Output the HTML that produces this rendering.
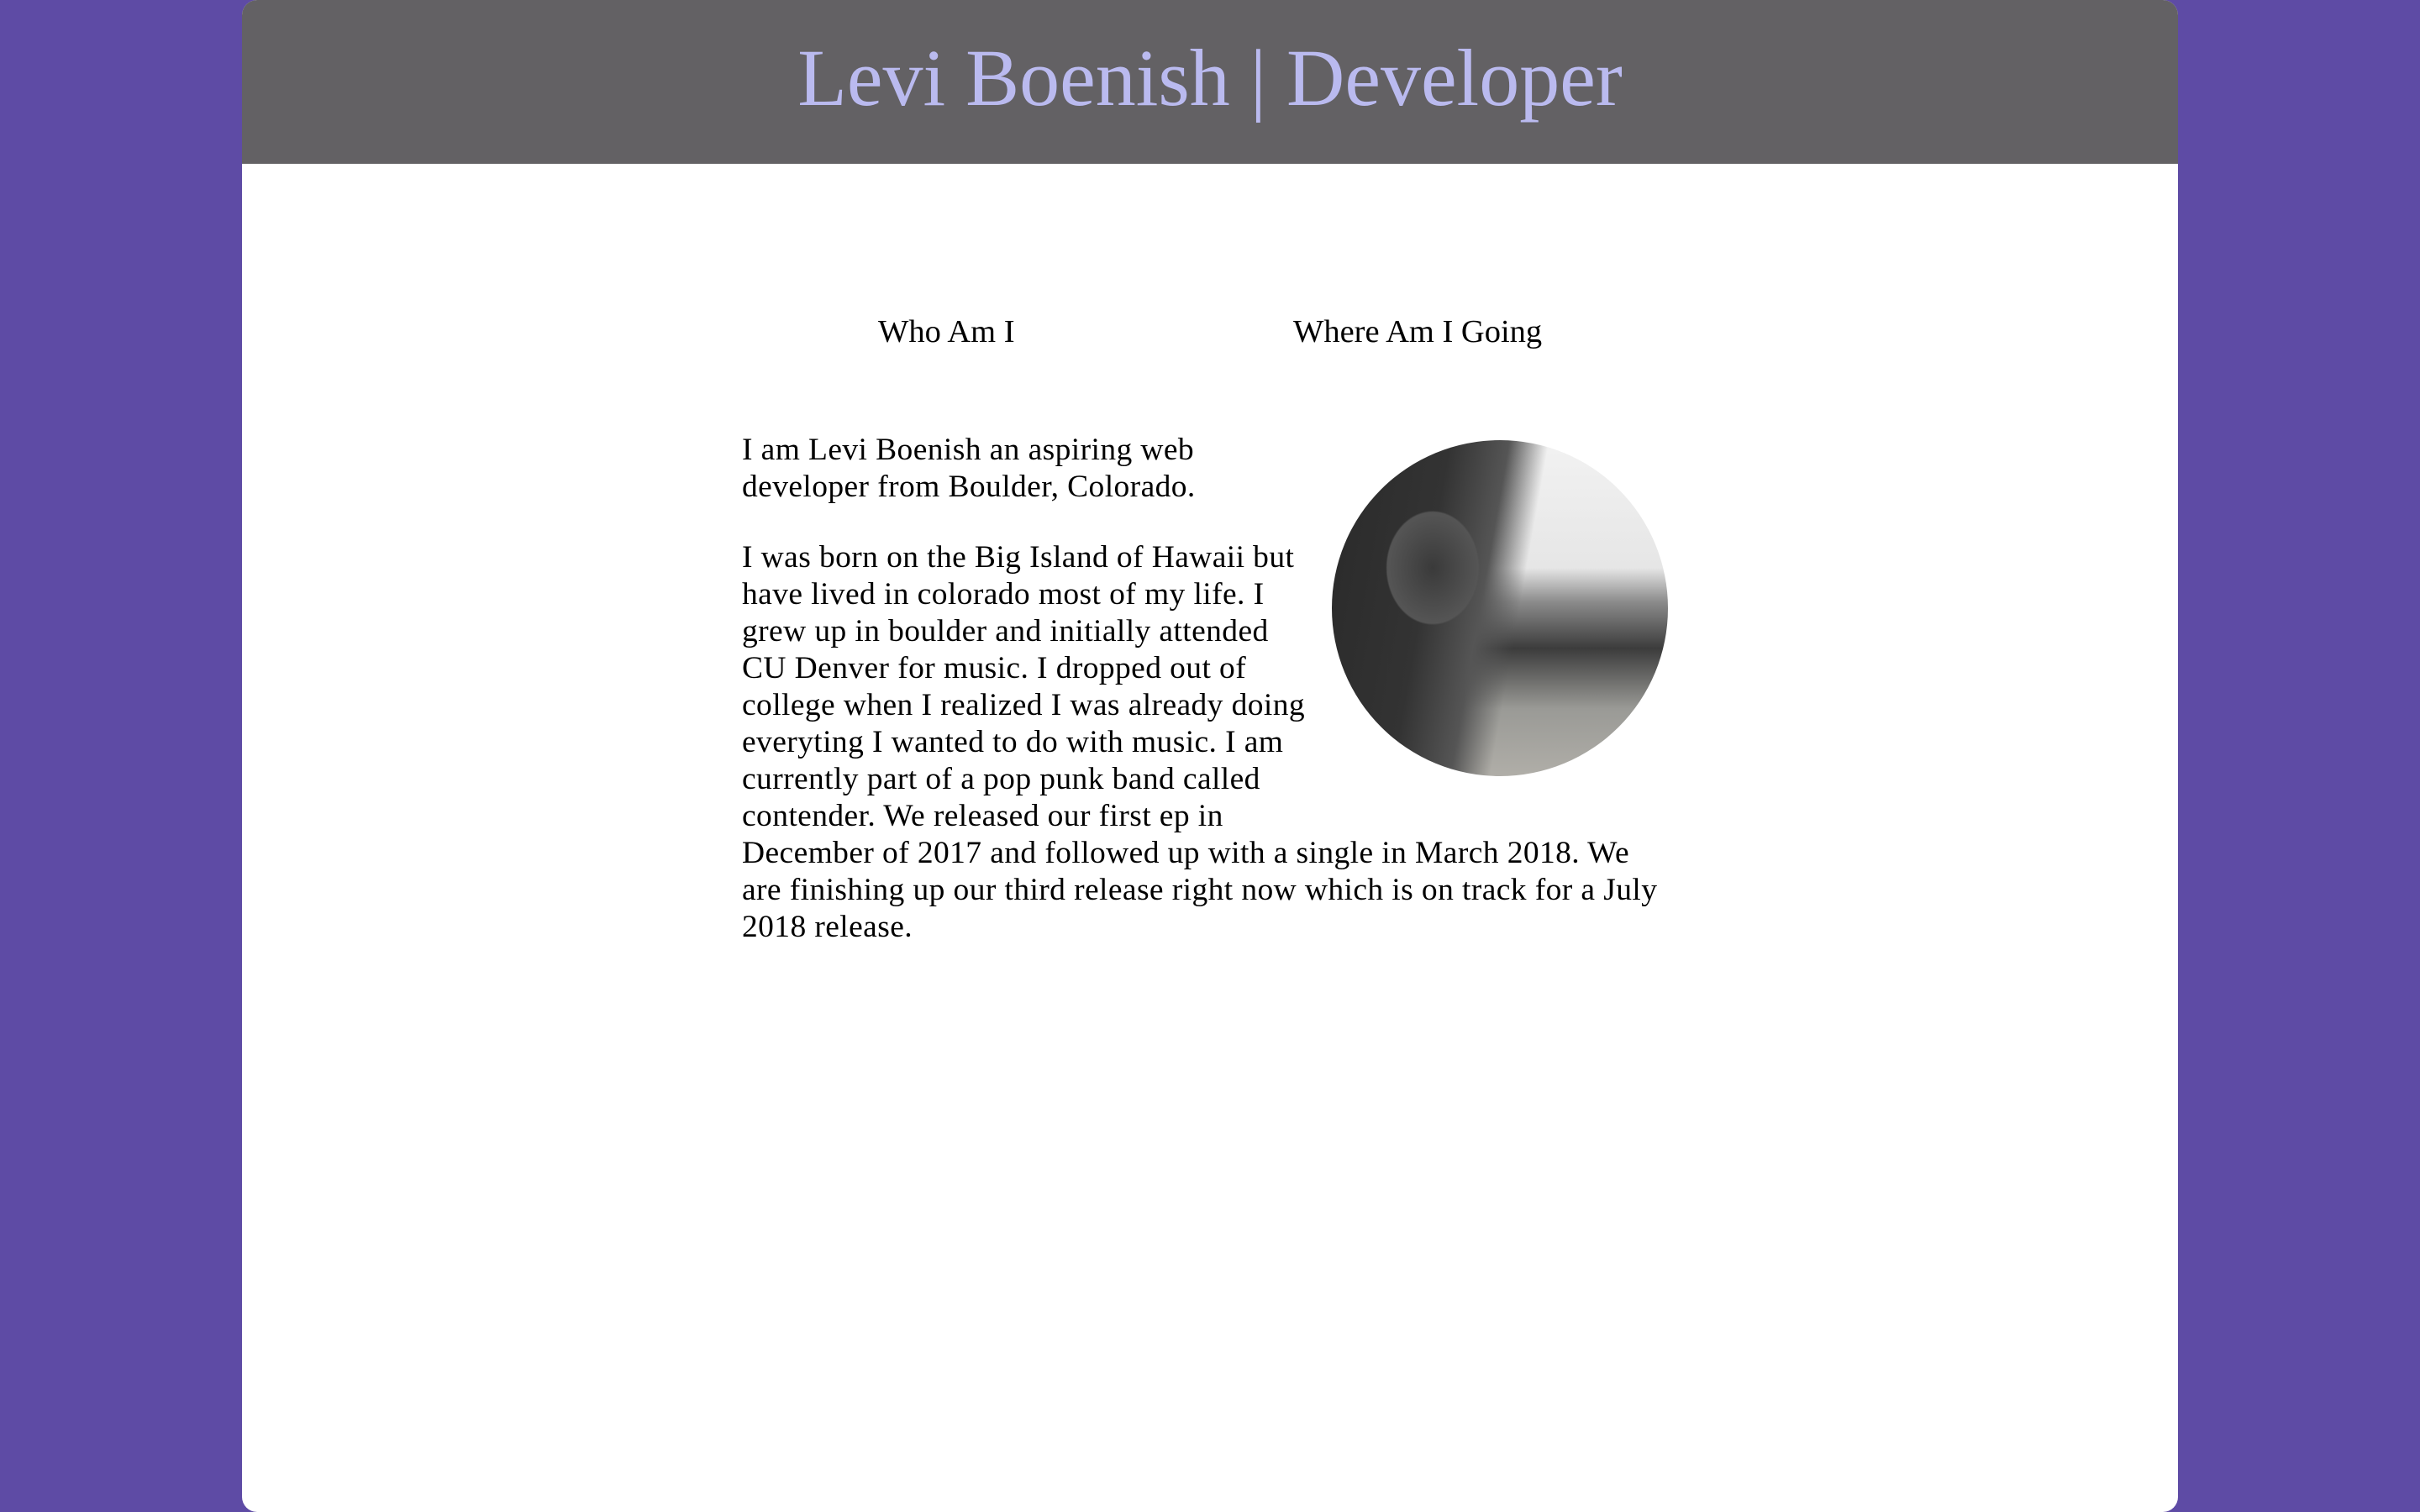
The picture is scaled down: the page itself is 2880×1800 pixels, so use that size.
<!DOCTYPE html>
<html><head><meta charset="utf-8">
<style>
html,body{margin:0;padding:0;}
body{width:2880px;height:1800px;background:#5e4ba5;position:relative;overflow:hidden;font-family:"Liberation Serif",serif;}
.wrap{position:absolute;left:288px;top:0;width:2304px;height:1800px;background:#fff;border-radius:18px;overflow:hidden;}
.hdr{position:absolute;left:0;top:0;width:100%;height:195px;background:#636164;}
.hdr h1{margin:0;position:absolute;left:0;right:0;top:38px;text-align:center;font-weight:normal;font-size:96px;line-height:110px;color:#babaef;}
.nav{position:absolute;top:373px;font-size:38.5px;line-height:44px;color:#000;}
.content{position:absolute;left:595px;top:514px;width:1102px;font-size:37.5px;line-height:44px;color:#000;white-space:nowrap;letter-spacing:0.4px;}
.content p{margin:0 0 40px 0;}
.pic{float:right;width:400px;height:400px;border-radius:50%;margin:10px 0 20px 20px;
background:
radial-gradient(ellipse 90px 110px at 30% 38%, #3a3a3a 0%, #555 60%, transparent 62%),
linear-gradient(100deg, #2a2a2a 0%, #333 30%, #555 45%, transparent 55%),
linear-gradient(180deg, #f2f2f2 0%, #e6e6e6 38%, #8c8c8c 48%, #3c3c3c 62%, #9a9a96 80%, #b0aea8 100%);}
</style></head><body>
<div class="wrap">
<div class="hdr"><h1>Levi Boenish | Developer</h1></div>
<div class="nav" style="left:757px;">Who Am I</div>
<div class="nav" style="left:1251px;">Where Am I Going</div>
<div class="content">
<div class="pic"></div>
<p>I am Levi Boenish an aspiring web<br>developer from Boulder, Colorado.</p>
<p>I was born on the Big Island of Hawaii but<br>have lived in colorado most of my life. I<br>grew up in boulder and initially attended<br>CU Denver for music. I dropped out of<br>college when I realized I was already doing<br>everyting I wanted to do with music. I am<br>currently part of a pop punk band called<br>contender. We released our first ep in<br>December of 2017 and followed up with a single in March 2018. We<br>are finishing up our third release right now which is on track for a July<br>2018 release.</p>
</div>
</div>
</body></html>
